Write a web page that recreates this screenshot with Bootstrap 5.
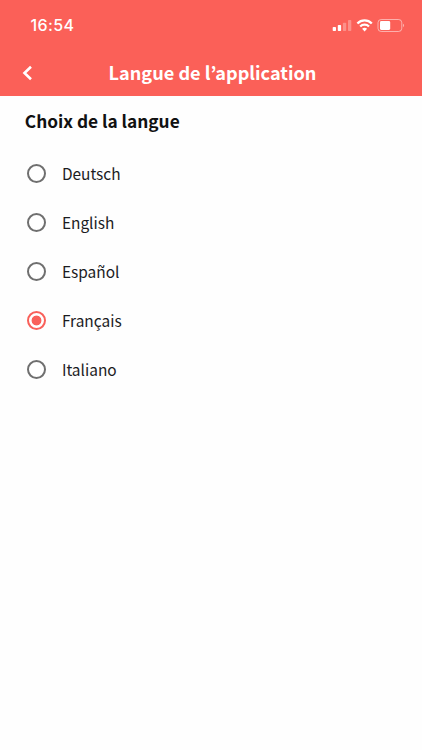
<!DOCTYPE html>
<html lang="fr">
<head>
<meta charset="utf-8">
<meta name="viewport" content="width=device-width, initial-scale=1">
<title>Langue de l’application</title>
<link href="https://cdn.jsdelivr.net/npm/bootstrap@5.3.0/dist/css/bootstrap.min.css" rel="stylesheet">
<style>
body { font-family: "Noto Sans CJK KR", "Noto Sans", sans-serif; color: #1c1c1e; background: #fefefe; }
.app-header { background: #fb6058; color: #fff; height: 96px; }
.status-bar { height: 50px; padding-left: 30.5px; padding-right: 17px; }
.clock { font: 500 16px/20px Inter, sans-serif; letter-spacing: .4px; }
.title-bar { height: 44px; display: grid; grid-template-columns: 54px 1fr 51px; }
.back { padding: 2px 0 0 22px; line-height: 0; color: #fff; }
.app-title { font-size: 18.15px; line-height: 26px; font-weight: 700; }
.app-title span, .section-title span, .choice span { white-space: nowrap; }
.section-title { font-size: 17.3px; line-height: 26px; font-weight: 700; margin: 0; padding-left: .8px; color: #111; }
.choices { padding: 0 27.4px; margin-top: 15px; }
.choice { height: 48.9px; gap: 15.5px; font-size: 15.45px; line-height: 24px; }
.choice .form-check-input { width: 19px; height: 19px; margin: 0; border: 2px solid #6f6f6f; background: #fff; box-shadow: none; flex: none; }
.choice .form-check-input:checked { border-color: #f9605a; background: radial-gradient(circle, #f9605a 4.5px, #fff 5.3px); }
</style>
</head>
<body>
<header class="app-header">
  <div class="status-bar d-flex align-items-center justify-content-between">
    <span class="clock">16:54</span>
    <svg width="73" height="18" viewBox="0 0 73 18" fill="#fff" aria-hidden="true">
      <rect x="0.7" y="11" width="3.3" height="4" rx=".8"/>
      <rect x="5.8" y="9" width="3.3" height="6" rx=".8"/>
      <rect x="10.9" y="6.7" width="3.3" height="8.3" rx=".8" opacity=".3"/>
      <rect x="16" y="4" width="3.3" height="11" rx=".8" opacity=".3"/>
      <g fill="none" stroke="#fff" stroke-width="2.3">
        <path d="M25.4 7.5A9.9 9.9 0 0 1 39.8 7.5"/>
        <path d="M28.2 10.5A6.2 6.2 0 0 1 37 10.5"/>
      </g>
      <path d="M30.1 12.8Q32.6 10.8 35.1 12.8L32.6 15.4Z"/>
      <rect x="46" y="3.5" width="23.8" height="12" rx="3.2" fill="none" stroke="#fff" stroke-opacity=".5"/>
      <rect x="48" y="5.1" width="10.2" height="8.8" rx="1.3"/>
      <path d="M71 7.8Q73.3 9.5 71 11.2Z" opacity=".5"/>
    </svg>
  </div>
  <div class="title-bar align-items-center">
    <button class="btn border-0 back text-start" type="button" aria-label="Retour">
      <svg width="11" height="16" viewBox="0 0 11 16" fill="none" stroke="#fff" stroke-width="2.6"><path d="M9 1.8 2.5 8 9 14.2"/></svg>
    </button>
    <h1 class="app-title m-0 text-center"><span>Langue de l’application</span></h1>
  </div>
</header>
<main>
  <div class="px-4 pt-2 mt-0"><h2 class="section-title mt-1"><span>Choix de la langue</span></h2></div>
  <div class="choices" role="radiogroup">
    <label class="choice d-flex align-items-center"><input class="form-check-input" type="radio" name="langue"><span>Deutsch</span></label>
    <label class="choice d-flex align-items-center"><input class="form-check-input" type="radio" name="langue"><span>English</span></label>
    <label class="choice d-flex align-items-center"><input class="form-check-input" type="radio" name="langue"><span>Español</span></label>
    <label class="choice d-flex align-items-center"><input class="form-check-input" type="radio" name="langue" checked><span>Français</span></label>
    <label class="choice d-flex align-items-center"><input class="form-check-input" type="radio" name="langue"><span>Italiano</span></label>
  </div>
</main>
<script src="https://cdn.jsdelivr.net/npm/bootstrap@5.3.0/dist/js/bootstrap.bundle.min.js"></script>
</body>
</html>
